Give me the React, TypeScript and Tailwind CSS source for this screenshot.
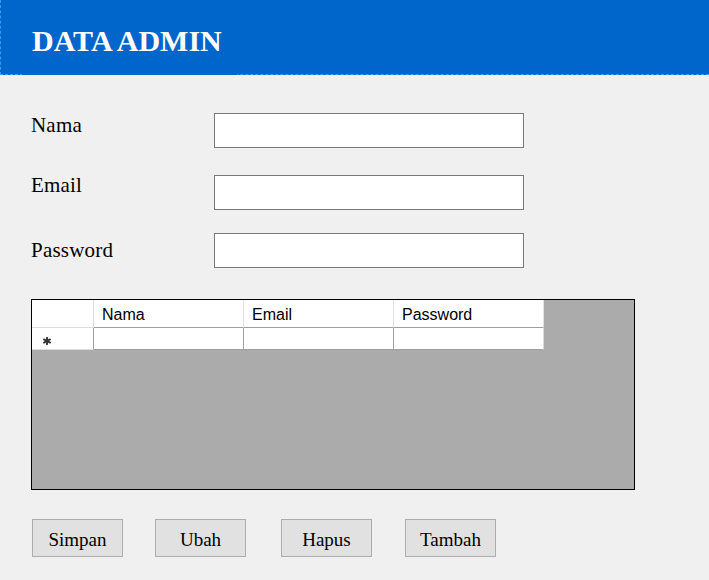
import React from "react";

const serif = { fontFamily: '"Liberation Serif", "Times New Roman", serif' };
const sans = { fontFamily: '"Liberation Sans", Arial, sans-serif' };

function Field({ label, labelMt }: { label: string; labelMt: string }) {
  return (
    <div className="flex items-start">
      <div className={`w-[183px] text-[21px] leading-[24px] tracking-[0.2px] text-black ${labelMt}`} style={serif}>
        {label}
      </div>
      <input
        type="text"
        className="w-[310px] h-[35px] bg-white border border-[#7a7a7a] outline-none"
      />
    </div>
  );
}

function Btn({ children }: { children: React.ReactNode }) {
  return (
    <button
      className="w-[91px] h-[38px] bg-[#e1e1e1] border border-[#adadad] flex items-center justify-center pt-[4px] text-[19px] leading-[22px] text-black"
      style={serif}
    >
      {children}
    </button>
  );
}

export default function App() {
  return (
    <div className="w-[709px] h-[580px] bg-[#f0f0f0] overflow-hidden flex flex-col">
      <div className="h-[75px] shrink-0 bg-[#0066cc] border-l border-b border-dashed border-[#3399ff] flex">
        <div className="ml-[21px] w-[215px] h-[75px] bg-[#0066cc] relative z-10 pl-[10px] pt-[26px]">
          <div
            className="text-white font-bold text-[30px] leading-[30px] whitespace-nowrap"
            style={serif}
          >
            DATA ADMIN
          </div>
        </div>
      </div>

      <div className="pl-[31px] flex flex-col">
        <div className="mt-[38px]">
          <Field label="Nama" labelMt="mt-0" />
        </div>
        <div className="mt-[27px]">
          <Field label="Email" labelMt="-mt-[2px]" />
        </div>
        <div className="mt-[23px]">
          <Field label="Password" labelMt="mt-[5px]" />
        </div>

        <div className="mt-[31px] w-[604px] h-[191px] border border-black bg-[#ababab] flex flex-col" style={sans}>
          <div className="flex h-[28px]">
            <div className="w-[62px] h-[28px] bg-white border-r border-b border-[#dcdcdc]" />
            <div className="w-[150px] h-[28px] bg-white border-r border-[#e3e3e3] border-b border-b-[#a0a0a0] flex items-center pl-[8px] pt-[2px] text-[16px] leading-[18px] text-black">
              Nama
            </div>
            <div className="w-[150px] h-[28px] bg-white border-r border-[#e3e3e3] border-b border-b-[#a0a0a0] flex items-center pl-[8px] pt-[2px] text-[16px] leading-[18px] text-black">
              Email
            </div>
            <div className="w-[150px] h-[28px] bg-white border-r border-[#e3e3e3] border-b border-b-[#a0a0a0] flex items-center pl-[8px] pt-[2px] text-[16px] leading-[18px] text-black">
              Password
            </div>
          </div>
          <div className="flex h-[22px]">
            <div className="w-[62px] h-[22px] bg-white border-r border-[#a0a0a0] border-b border-b-[#dcdcdc] relative">
              <svg className="absolute left-[11px] top-[9px]" width="8" height="8" viewBox="0 0 8 8">
                <g stroke="#333" strokeWidth="1.9" strokeLinecap="round">
                  <line x1="4" y1="0.8" x2="4" y2="7.2" />
                  <line x1="1" y1="2.4" x2="7" y2="5.6" />
                  <line x1="1" y1="5.6" x2="7" y2="2.4" />
                </g>
              </svg>
            </div>
            <div className="w-[150px] h-[22px] bg-white border-r border-b border-[#a0a0a0]" />
            <div className="w-[150px] h-[22px] bg-white border-r border-b border-[#a0a0a0]" />
            <div className="w-[150px] h-[22px] bg-white border-r border-b border-[#dcdcdc] border-r-[#dcdcdc] border-b-[#a0a0a0]" />
          </div>
        </div>

        <div className="mt-[29px] flex pl-[1px]">
          <Btn>Simpan</Btn>
          <div className="ml-[32px]">
            <Btn>Ubah</Btn>
          </div>
          <div className="ml-[35px]">
            <Btn>Hapus</Btn>
          </div>
          <div className="ml-[33px]">
            <Btn>Tambah</Btn>
          </div>
        </div>
      </div>
    </div>
  );
}
